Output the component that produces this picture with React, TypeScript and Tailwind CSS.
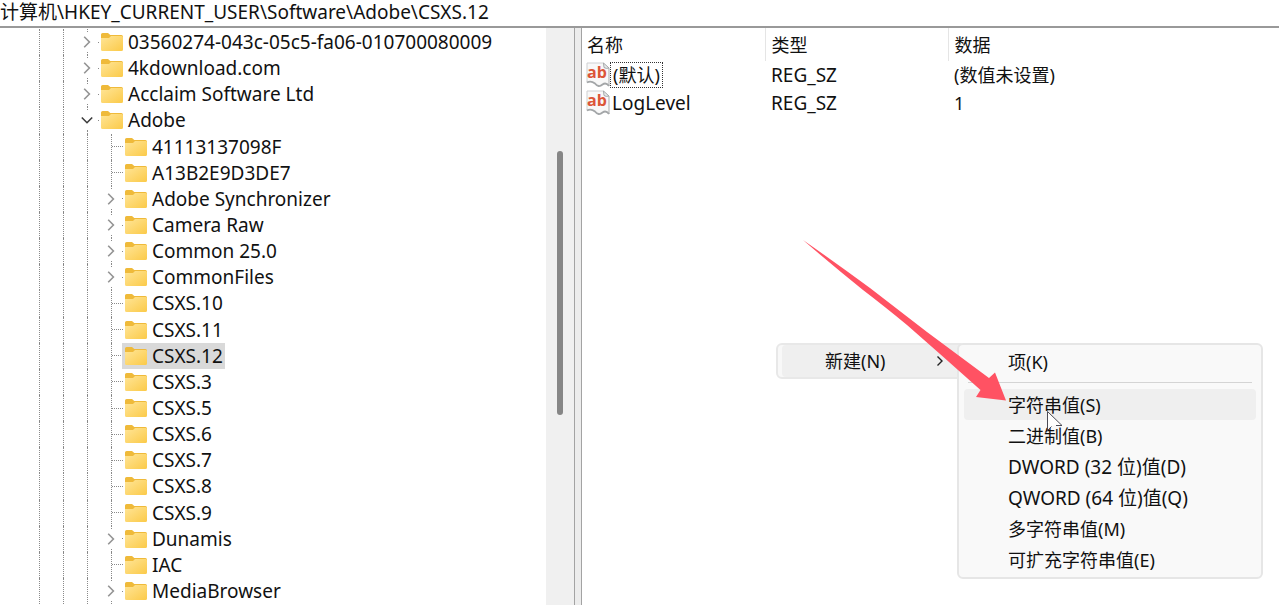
import { useState } from "react";

type TreeKey = { name: string; level: 1 | 2; state: "leaf" | "closed" | "open" };

const keys: TreeKey[] = [
  { name: "03560274-043c-05c5-fa06-010700080009", level: 1, state: "closed" },
  { name: "4kdownload.com", level: 1, state: "closed" },
  { name: "Acclaim Software Ltd", level: 1, state: "closed" },
  { name: "Adobe", level: 1, state: "open" },
  { name: "41113137098F", level: 2, state: "leaf" },
  { name: "A13B2E9D3DE7", level: 2, state: "leaf" },
  { name: "Adobe Synchronizer", level: 2, state: "closed" },
  { name: "Camera Raw", level: 2, state: "closed" },
  { name: "Common 25.0", level: 2, state: "closed" },
  { name: "CommonFiles", level: 2, state: "closed" },
  { name: "CSXS.10", level: 2, state: "leaf" },
  { name: "CSXS.11", level: 2, state: "leaf" },
  { name: "CSXS.12", level: 2, state: "leaf" },
  { name: "CSXS.3", level: 2, state: "leaf" },
  { name: "CSXS.5", level: 2, state: "leaf" },
  { name: "CSXS.6", level: 2, state: "leaf" },
  { name: "CSXS.7", level: 2, state: "leaf" },
  { name: "CSXS.8", level: 2, state: "leaf" },
  { name: "CSXS.9", level: 2, state: "leaf" },
  { name: "Dunamis", level: 2, state: "closed" },
  { name: "IAC", level: 2, state: "leaf" },
  { name: "MediaBrowser", level: 2, state: "closed" },
];

const values = [
  { name: "(默认)", type: "REG_SZ", data: "(数值未设置)", focused: true },
  { name: "LogLevel", type: "REG_SZ", data: "1", focused: false },
];

const valueKinds = [
  { label: "字符串值(S)", size: "text-lg" },
  { label: "二进制值(B)", size: "text-lg" },
  { label: "DWORD (32 位)值(D)", size: "text-[19px]" },
  { label: "QWORD (64 位)值(Q)", size: "text-[19px]" },
  { label: "多字符串值(M)", size: "text-lg" },
  { label: "可扩充字符串值(E)", size: "text-lg" },
];

function Folder() {
  return (
    <svg width="22" height="18" viewBox="0 0 22 18" className="shrink-0" aria-hidden="true">
      <defs>
        <linearGradient id="folder-face" x1="0" y1="0" x2="1" y2="1">
          <stop offset="0" stopColor="#ffe597" />
          <stop offset="1" stopColor="#fbca49" />
        </linearGradient>
      </defs>
      <path d="M0 1.6Q0 0 1.6 0H7L9.3 2H20.4Q22 2 22 3.6V8H0Z" fill="#efba3a" />
      <path d="M0 5H8L10 3H20.6Q22 3 22 4.4V16.5Q22 18 20.5 18H1.5Q0 18 0 16.5Z" fill="url(#folder-face)" />
    </svg>
  );
}

function Guide() {
  return (
    <span className="flex w-6 shrink-0 self-stretch pl-3">
      <span className="border-l border-dotted border-[#8a8a8a]" />
    </span>
  );
}

function Branch({ state }: { state: TreeKey["state"] }) {
  if (state === "leaf") {
    return (
      <span className="flex w-6 shrink-0 items-center self-stretch pl-3">
        <span className="self-stretch border-l border-dotted border-[#8a8a8a]" />
        <span className="flex-1 border-t border-dotted border-[#8a8a8a]" />
      </span>
    );
  }
  return (
    <span className="grid w-6 shrink-0 grid-rows-[1fr_20px_1fr] self-stretch">
      <span className="ml-3 border-l border-dotted border-[#8a8a8a]" />
      <span className="flex items-center justify-between pl-1.5">
        <svg width="13" height="12" viewBox="0 0 13 12" fill="none" aria-hidden="true">
          {state === "open" ? (
            <path d="M0.8 3.5L6 8.7L11.2 3.5" stroke="#3c3c3c" strokeWidth="1.6" />
          ) : (
            <path d="M3.2 0.8L8.4 6L3.2 11.2" stroke="#949494" strokeWidth="1.6" />
          )}
        </svg>
        <span className="h-px w-px bg-[#8a8a8a]" />
      </span>
      <span className="ml-3 border-l border-dotted border-[#8a8a8a]" />
    </span>
  );
}

function StringIcon() {
  return (
    <svg width="24" height="26" viewBox="0 0 24 26" className="shrink-0 overflow-visible" aria-hidden="true">
      <path d="M1 1H17.5L23 6V24Q20 20 16.5 22.5Q12.5 26 9 21.5Q5 18.5 1 20.5Z" fill="#f8f8f8" />
      <path d="M1 20.5V1H17.5" fill="none" stroke="#cfd0d2" />
      <path d="M23 6V24" stroke="#a9abad" />
      <path d="M1 20.5Q5 18.5 9 21.5Q12.5 26 16.5 22.5Q20 20 23 24" fill="none" stroke="#a3a6a8" strokeWidth="1.8" />
      <path d="M17.5 1L18 5.5Q20 7 23 6Z" fill="#e7e9ea" stroke="#a5a8aa" />
      <text x="11" y="16" textAnchor="middle" fill="#dc5638" fontSize="16" fontWeight="700" fontFamily="Open Sans, Noto Sans, sans-serif">
        ab
      </text>
    </svg>
  );
}

export default function App() {
  const [path, setPath] = useState("计算机\\HKEY_CURRENT_USER\\Software\\Adobe\\CSXS.12");
  const [selected, setSelected] = useState("CSXS.12");

  return (
    <div className="relative flex min-h-screen flex-col overflow-hidden bg-white font-['Noto_Sans','Noto_Sans_CJK_SC',sans-serif] text-lg leading-6 text-[#111]">
      <header className="border-b-2 border-[#999] pb-0.5">
        <input
          aria-label="地址"
          value={path}
          onChange={(e) => setPath(e.target.value)}
          className="block h-6 w-full text-[19px] leading-6 outline-none"
        />
      </header>

      <div className="flex flex-1">
        <nav aria-label="注册表项" className="flex w-[582px] shrink-0">
          <ul className="flex flex-1 flex-col py-px pl-[27px] text-[19px]">
            {keys.map((key) => (
              <li key={key.name} className="flex min-h-[26px] flex-1 items-center">
                <Guide />
                <Guide />
                {key.level === 2 && <Guide />}
                <Branch state={key.state} />
                <button
                  type="button"
                  onClick={() => setSelected(key.name)}
                  className={
                    key.name === selected
                      ? "-ml-px flex h-[26px] items-center gap-[5px] bg-[#d9d9d9] pr-0.5 pl-[3px]"
                      : "-ml-px flex h-[26px] items-center gap-[5px] pr-0.5 pl-[3px]"
                  }
                >
                  <Folder />
                  <span className="whitespace-nowrap">{key.name}</span>
                </button>
              </li>
            ))}
          </ul>
          <div className="flex w-7 flex-col items-center bg-[#f0f0f0] pt-[123px]">
            <div className="h-[264px] w-1.5 rounded-full bg-[#868686]" />
          </div>
          <div className="w-2 border-x border-[#a3a3a3] bg-[#ececec]" />
        </nav>

        <main className="flex-1">
          <table className="w-full table-fixed text-left">
            <colgroup>
              <col className="w-[183px]" />
              <col className="w-[183px]" />
              <col />
            </colgroup>
            <thead>
              <tr className="h-[33px]">
                <th className="border-r border-[#e5e5e5] pl-[5px] font-normal">名称</th>
                <th className="border-r border-[#e5e5e5] pl-1.5 font-normal">类型</th>
                <th className="pl-1.5 font-normal">数据</th>
              </tr>
            </thead>
            <tbody>
              {values.map((v) => (
                <tr key={v.name} className="h-7">
                  <td className="pl-1">
                    <span className="flex items-center">
                      <StringIcon />
                      <span
                        className={
                          v.focused
                            ? "border border-dotted border-[#333] px-0.5"
                            : "border border-transparent px-px text-[19px]"
                        }
                      >
                        {v.name}
                      </span>
                    </span>
                  </td>
                  <td className="pl-1.5 text-[19px]">{v.type}</td>
                  <td className="pl-1.5">{v.data}</td>
                </tr>
              ))}
            </tbody>
          </table>
        </main>
      </div>

      <div role="menu" className="absolute top-[343px] left-[776px] w-[190px] rounded-md border-2 border-[#e8e8e8] bg-[#f8f8f8] pl-1">
        <button
          type="button"
          role="menuitem"
          aria-haspopup="menu"
          className="flex h-8 w-full items-center justify-between rounded-l bg-[#efefef] pr-4 pl-[43px]"
        >
          新建(N)
          <svg width="12" height="12" viewBox="0 0 12 12" fill="none" aria-hidden="true">
            <path d="M1.5 1.5L6 6L1.5 10.5" stroke="#222" strokeWidth="1.4" />
          </svg>
        </button>
      </div>

      <div role="menu" className="absolute top-[343px] left-[957px] w-[306px] rounded-md border-2 border-[#e6e6e6] bg-[#f9f9f9] px-[5px] pt-px pb-0.5">
        <button type="button" role="menuitem" className="flex h-8 w-full items-center pl-11">
          项(K)
        </button>
        <hr className="mx-1 mt-1 mb-1.5 border-[#d4d4d4]" />
        {valueKinds.map((kind, i) => (
          <button
            key={kind.label}
            type="button"
            role="menuitem"
            className={`${kind.size} ${
              i === 0
                ? "flex h-[31px] w-full items-center rounded bg-[#efefef] pl-11"
                : "flex h-[31px] w-full items-center pl-11"
            }`}
          >
            {kind.label}
          </button>
        ))}
      </div>

      <svg
        width="206"
        height="164"
        viewBox="0 0 206 164"
        className="pointer-events-none absolute top-[240px] left-[802px]"
        aria-hidden="true"
      >
        <path
          d="M1 0Q34 23 68 48L125 92L187 138L193 132.5L204 160.5L174 157L178.5 150L138 114L105 85Q82 66 61 50Q30 25 1 0Z"
          fill="#ff5263"
        />
      </svg>
      <svg
        width="18"
        height="24"
        viewBox="0 0 18 24"
        className="pointer-events-none absolute top-[410px] left-[1046px]"
        aria-hidden="true"
      >
        <path d="M1.5 1.5V20.5L5.5 16L9 15H16Z" fill="#fff" fillOpacity="0.9" />
        <path d="M5.5 16.5L1.5 20.5V1.5L16 15.5H10" fill="none" stroke="#4b4b55" />
      </svg>
    </div>
  );
}
